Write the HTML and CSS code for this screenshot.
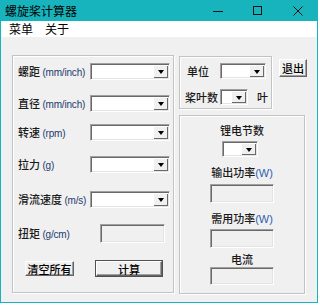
FILE: index.html
```html
<!DOCTYPE html>
<html lang="zh-CN">
<head>
    <meta charset="UTF-8">
    <title>螺旋桨计算器</title>
    <link rel="stylesheet" href="styles.css">
</head>
<body>
    <div class="window">
        <!-- Title bar -->
        <div class="titlebar">
            <span class="title">螺旋桨计算器</span>
            <div class="controls">
                <span class="ctl"><svg width="10" height="10" viewBox="0 0 10 10"><path d="M0 5.5h10" stroke="#111" stroke-width="1"/></svg></span>
                <span class="ctl"><svg width="10" height="10" viewBox="0 0 10 10"><rect x="0.5" y="0.5" width="8" height="8" fill="none" stroke="#111"/></svg></span>
                <span class="ctl"><svg width="10" height="10" viewBox="0 0 10 10"><path d="M0.5 0.5l9 9M9.5 0.5l-9 9" stroke="#111" stroke-width="1"/></svg></span>
            </div>
        </div>

        <!-- Menu -->
        <div class="menubar">
            <span class="menu-item">菜单</span>
            <span class="menu-item">关于</span>
        </div>

        <div class="client">
            <!-- Left: inputs -->
            <div class="group left-group">
                <div class="row r1">
                    <span class="label">螺距 <em>(mm/inch)</em></span>
                    <div class="combo wide"><span class="drop"></span></div>
                </div>
                <div class="row r2">
                    <span class="label">直径 <em>(mm/inch)</em></span>
                    <div class="combo wide"><span class="drop"></span></div>
                </div>
                <div class="row r3">
                    <span class="label">转速 <em>(rpm)</em></span>
                    <div class="combo wide"><span class="drop"></span></div>
                </div>
                <div class="row r4">
                    <span class="label">拉力 <em>(g)</em></span>
                    <div class="combo wide"><span class="drop"></span></div>
                </div>
                <div class="row r5">
                    <span class="label">滑流速度 <em>(m/s)</em></span>
                    <div class="combo wide"><span class="drop"></span></div>
                </div>
                <div class="row r6">
                    <span class="label">扭矩 <em>(g/cm)</em></span>
                    <div class="textbox torque"></div>
                </div>
                <div class="btn-row">
                    <button class="btn btn-clear">清空所有</button>
                    <button class="btn btn-calc">计算</button>
                </div>
            </div>

            <!-- Right column -->
            <div class="right-col">
                <div class="top-row">
                    <div class="group unit-group">
                        <div class="urow u1">
                            <span class="ulabel">单位</span>
                            <div class="combo unit"><span class="drop"></span></div>
                        </div>
                        <div class="urow u2">
                            <span class="blabel">桨叶数</span>
                            <div class="combo blades"><span class="drop"></span></div>
                            <span class="suffix">叶</span>
                        </div>
                    </div>
                    <button class="btn btn-exit">退出</button>
                </div>

                <div class="group power-group">
                    <span class="plabel p1">锂电节数</span>
                    <div class="combo cells"><span class="drop"></span></div>
                    <span class="plabel p2">输出功率<em>(W)</em></span>
                    <div class="textbox out t1"></div>
                    <span class="plabel p3">需用功率<em>(W)</em></span>
                    <div class="textbox out t2"></div>
                    <span class="plabel p4">电流</span>
                    <div class="textbox out t3"></div>
                </div>
            </div>
        </div>
    </div>
</body>
</html>
```

FILE: styles.css
```css
/* Window chrome */
body {
    margin: 0;
    background: #fff;
    font-family: "Noto Sans CJK SC", "Microsoft YaHei", sans-serif;
    font-size: 11px;
    font-weight: 500;
    color: #1a1a1a;
}

.window {
    box-sizing: border-box;
    width: 318px;
    height: 303px;
    border: 1px solid #18b4be;
    border-top: none;
    background: #f0f0f0;
    display: flex;
    flex-direction: column;
}

.titlebar {
    height: 21px;
    background: #18b4be;
    display: flex;
    align-items: center;
    margin: 0 -1px;
}

.title {
    padding-left: 5px;
    color: #000;
    font-size: 12px;
    font-weight: 400;
    line-height: 14px;
}

.controls {
    margin-left: auto;
    display: flex;
}

.ctl {
    width: 40px;
    height: 21px;
    display: flex;
    align-items: center;
    justify-content: center;
}

.menubar {
    height: 16px;
    background: #fff;
    display: flex;
    align-items: center;
    padding-left: 8px;
}

.menu-item {
    margin-right: 12px;
    color: #000;
    font-size: 12px;
    font-weight: 400;
    line-height: 14px;
}

.client {
    flex: 1;
    display: flex;
    align-items: flex-start;
    padding: 18px 0 0 11px;
}

/* Group boxes (etched) */
.group {
    box-sizing: border-box;
    border: 1px solid #c3c3c3;
    box-shadow: inset 1px 1px #fff, 1px 1px #fff;
}

em {
    font-style: normal;
    font-family: "Liberation Sans", Arial, sans-serif;
    font-size: 10px;
    font-weight: 400;
    letter-spacing: -0.2px;
    color: #1e3a6e;
}

/* Left group */
.left-group {
    width: 162px;
    height: 238px;
    padding-left: 5px;
}

.row {
    display: flex;
    align-items: center;
    height: 17px;
}

.label {
    width: 72px;
    white-space: nowrap;
    line-height: 14px;
}

.r1 { margin-top: 7px; }
.r2 { margin-top: 15px; }
.r3 { margin-top: 12px; }
.r4 { margin-top: 15px; }
.r5 { margin-top: 18px; }
.r6 { margin-top: 16px; height: 19px; }

/* Combo boxes and text boxes (sunken) */
.combo, .textbox {
    box-sizing: border-box;
    border-top: 1px solid #a0a0a0;
    border-left: 1px solid #a0a0a0;
    border-right: 1px solid #fff;
    border-bottom: 1px solid #fff;
    box-shadow: inset 1px 1px #696969, inset -1px -1px #e3e3e3;
}

.combo {
    background: #fff;
    height: 17px;
    display: flex;
    justify-content: flex-end;
    padding: 1px;
}

.drop {
    width: 15px;
    background: #f0f0f0;
    box-shadow: inset 1px 1px #fff, inset -1px -1px #696969;
    display: flex;
    align-items: center;
    justify-content: center;
}

.drop::after {
    content: "";
    border-left: 3px solid transparent;
    border-right: 3px solid transparent;
    border-top: 4px solid #000;
    margin-top: 1px;
}

.textbox {
    background: #f0f0f0;
}

.wide { width: 80px; }

.torque {
    width: 65px;
    height: 19px;
    margin-left: 10px;
}

/* Buttons (raised) */
.btn {
    box-sizing: border-box;
    font-family: inherit;
    font-size: 11px;
    font-weight: 500;
    color: #000;
    background: #f0f0f0;
    border-top: 1px solid #fff;
    border-left: 1px solid #fff;
    border-right: 1px solid #646464;
    border-bottom: 1px solid #646464;
    box-shadow: inset -1px -1px #a0a0a0;
    padding: 0;
    line-height: 12px;
    white-space: nowrap;
}

.btn-row {
    display: flex;
    margin-top: 18px;
    padding-left: 7px;
}

.btn-clear {
    width: 49px;
    height: 15px;
}

.btn-calc {
    width: 66px;
    height: 15px;
    margin-left: 22px;
    outline: 1px solid #505050;
}

/* Right column */
.right-col {
    margin-left: 5px;
}

.top-row {
    display: flex;
    align-items: flex-start;
    margin-top: 1px;
}

.unit-group {
    width: 93px;
    height: 53px;
}

.urow {
    display: flex;
    align-items: center;
    height: 16px;
}

.u1 { margin-top: 6px; padding-left: 7px; }
.u2 { margin-top: 10px; padding-left: 5px; }

.ulabel {
    width: 33px;
    line-height: 14px;
}

.blabel {
    width: 35px;
    line-height: 14px;
    white-space: nowrap;
}

.combo.unit { width: 46px; height: 16px; }
.combo.blades { width: 28px; height: 16px; }

.suffix {
    margin-left: 9px;
    line-height: 14px;
}

.btn-exit {
    width: 28px;
    height: 18px;
    margin: 3px 0 0 7px;
}

.power-group {
    width: 126px;
    height: 179px;
    margin-top: 6px;
    display: flex;
    flex-direction: column;
    align-items: center;
}

.plabel {
    line-height: 14px;
    white-space: nowrap;
}

.plabel em {
    font-size: 11px;
    color: #2e5fae;
    letter-spacing: 0;
}

.p1 { margin-top: 7px; }
.combo.cells { width: 36px; height: 16px; margin-top: 4px; margin-right: 4px; }
.p2 { margin-top: 8px; }
.out { width: 64px; height: 19px; }
.t1 { margin-top: 4px; }
.p3 { margin-top: 8px; }
.t2 { margin-top: 3px; }
.p4 { margin-top: 4px; }
.t3 { margin-top: 1px; height: 18px; }
```
